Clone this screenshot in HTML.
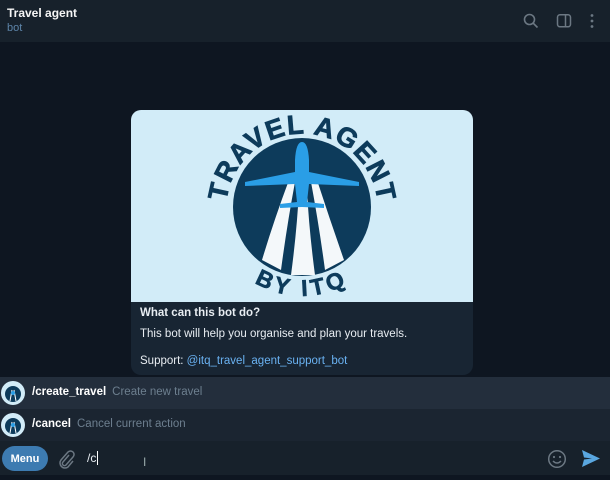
<!DOCTYPE html>
<html><head><meta charset="utf-8"><style>
*{margin:0;padding:0;box-sizing:border-box}
body{width:610px;height:480px;background:#0e1621;font-family:"Liberation Sans",sans-serif;position:relative;overflow:hidden}
.hdr{position:absolute;left:0;top:0;width:610px;height:42px;background:#17212b}
.t1{position:absolute;left:7px;top:6px;color:#f5f5f5;font-size:12px;font-weight:bold}
.t2{position:absolute;left:7px;top:22px;color:#5d84a8;font-size:11px}
.card{position:absolute;left:131px;top:110px;width:342px;height:265px;border-radius:10px;background:#182533;overflow:hidden}
.img{position:absolute;left:0;top:0;width:342px;height:192px;background:#d2ecf8}
.tx{position:absolute;left:9px;color:#e8edf2;font-size:11.5px}
.row{position:absolute;left:0;width:610px;height:32px}
.av{position:absolute;left:1px;top:4px;width:24px;height:24px;border-radius:50%;background:#d2ecf8;overflow:hidden}
.cmd{position:absolute;left:32px;top:9px;font-size:11.5px;color:#fff;font-weight:bold}
.desc{color:#6d7f8f;font-weight:normal;margin-left:6px}
.bar{position:absolute;left:0;top:441px;width:610px;height:34px;background:#17212b}
.menu{position:absolute;left:2px;top:5px;width:46px;height:25px;border-radius:13px;background:#3d7bb1;color:#fff;font-size:11px;font-weight:bold;text-align:center;line-height:26px}
</style></head><body>
<div class="hdr">
<div class="t1">Travel agent</div><div class="t2">bot</div>
<svg style="position:absolute;left:523px;top:13px" width="16" height="16" viewBox="0 0 16 16"><circle cx="6.5" cy="6.5" r="5" fill="none" stroke="#6c7883" stroke-width="1.6"/><path d="M10.2 10.2L14.5 14.5" stroke="#6c7883" stroke-width="1.6"/></svg>
<svg style="position:absolute;left:556px;top:13px" width="16" height="16" viewBox="0 0 16 16"><rect x="1.5" y="1.8" width="13" height="12" rx="2.5" fill="none" stroke="#6c7883" stroke-width="1.5"/><path d="M9.5 2v12" stroke="#6c7883" stroke-width="1.5"/></svg>
<svg style="position:absolute;left:588px;top:13px" width="8" height="16" viewBox="0 0 8 16"><circle cx="4" cy="2.5" r="1.4" fill="#6c7883"/><circle cx="4" cy="8" r="1.4" fill="#6c7883"/><circle cx="4" cy="13.5" r="1.4" fill="#6c7883"/></svg>
</div>
<div class="card">
<div class="img">
<svg width="342" height="192" viewBox="0 0 342 192">
<defs><path id="arcT" d="M96 112 A76 76 0 1 1 246 112"/><path id="arcB" d="M80 95 A91 91 0 0 0 262 95"/></defs>
<circle cx="171" cy="97" r="69" fill="#0d3b5b"/>
<path d="M131 150 Q143 110 158 70 L164 72 Q156 115 150 160 Z" fill="#f4f8fa"/>
<path d="M160 165 Q166 120 168 80 L176 80 Q178 120 184 165 Z" fill="#f4f8fa"/>
<path d="M213 150 Q199 110 186 70 L180 72 Q188 115 194 160 Z" fill="#f4f8fa"/>
<path d="M171 32 Q177 32 178 50 L178 62 L228 72 L228 76 L178 74 L176 92 L193 94 L193 98 L171 97 L149 98 L149 94 L166 92 L164 74 L114 76 L114 72 L164 62 L164 50 Q165 32 171 32Z" fill="#2a9ee6"/>
<text font-family="Liberation Sans,sans-serif" font-weight="bold" font-size="27" fill="#0d3b5b" stroke="#0d3b5b" stroke-width="0.8"><textPath href="#arcT" startOffset="50%" text-anchor="middle" textLength="222" lengthAdjust="spacing">TRAVEL AGENT</textPath></text>
<text font-family="Liberation Sans,sans-serif" font-weight="bold" font-size="23" fill="#0d3b5b" stroke="#0d3b5b" stroke-width="0.6" letter-spacing="4"><textPath href="#arcB" startOffset="50%" text-anchor="middle">BY ITQ</textPath></text>
</svg>
</div>
<div class="tx" style="top:197px;font-weight:bold">What can this bot do?</div>
<div class="tx" style="top:218px">This bot will help you organise and plan your travels.</div>
<div class="tx" style="top:245px">Support: <span style="color:#6ab2f2">@itq_travel_agent_support_bot</span></div>
</div>
<div class="row" style="top:377px;background:#232e3c"><div class="av"><svg width="24" height="24"><circle cx="12" cy="13" r="8" fill="#0d3b5b"/><path d="M9 20L11 9M13 9L15 20" stroke="#fff"/><circle cx="12" cy="12" r="2" fill="#2a9ee6"/></svg></div><div class="cmd">/create_travel<span class="desc">Create new travel</span></div></div>
<div class="row" style="top:409px;background:#1b2531"><div class="av"><svg width="24" height="24"><circle cx="12" cy="13" r="8" fill="#0d3b5b"/><path d="M9 20L11 9M13 9L15 20" stroke="#fff"/><circle cx="12" cy="12" r="2" fill="#2a9ee6"/></svg></div><div class="cmd">/cancel<span class="desc">Cancel current action</span></div></div>
<div class="bar">
<div class="menu">Menu</div>
<svg style="position:absolute;left:57px;top:8px" width="18" height="20" viewBox="0 0 18 20"><path d="M12 6L6 13a2 2 0 0 0 3 3l7-8a3.5 3.5 0 0 0-5-5L4 11a5 5 0 0 0 7 7l5-6" fill="none" stroke="#6c7883" stroke-width="1.5"/></svg>
<div style="position:absolute;left:87px;top:10px;color:#e8edf2;font-size:12px">/c<span style="border-left:1px solid #fff;margin-left:1px"></span></div>
<div style="position:absolute;left:143px;top:14px;color:#9aa;font-size:12px">I</div>
<svg style="position:absolute;left:547px;top:8px" width="20" height="20" viewBox="0 0 20 20"><circle cx="10" cy="10" r="8.3" fill="none" stroke="#6c7883" stroke-width="1.5"/><circle cx="7" cy="8" r="1.1" fill="#6c7883"/><circle cx="13" cy="8" r="1.1" fill="#6c7883"/><path d="M6 12q4 4 8 0" fill="none" stroke="#6c7883" stroke-width="1.5"/></svg>
<svg style="position:absolute;left:582px;top:9px" width="18" height="17" viewBox="0 0 18 17"><path d="M0 0L18 8.5L0 17L2 9.5L10 8.5L2 7.5Z" fill="#5aa7e0"/></svg>
</div>
</body></html>
